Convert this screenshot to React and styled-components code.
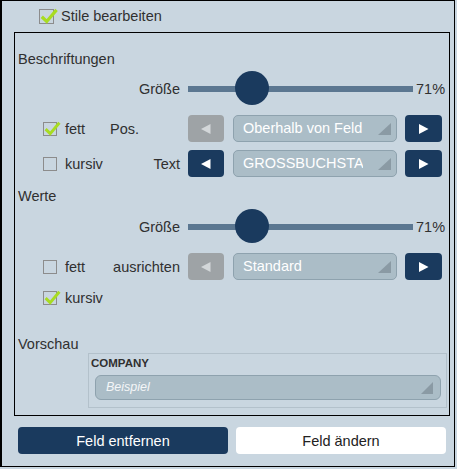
import React from "react";
import styled, { createGlobalStyle } from "styled-components";

const C = {
  bg: "#c9d6e0",
  text: "#303030",
  navy: "#1a3a5e",
  disabled: "#9ea3a6",
  disabledArrow: "#d3d7d9",
  drop: "#abbdc7",
  dropBorder: "#8ea2ae",
  dropTri: "#8a9aa4",
  track: "#5b7791",
  lime: "#a8dc22",
  boxBorder: "#8c8c8c",
  previewBorder: "#b3c1cb",
};

const FS = "14.5px";

const Global = createGlobalStyle`
  html, body { margin: 0; padding: 0; background: ${C.bg}; }
  body { font-family: "Liberation Sans", Arial, sans-serif; color: ${C.text}; }
`;

const Panel = styled.div`
  width: 455px;
  height: 467px;
  box-sizing: border-box;
  border: 1px solid #000;
  border-left-width: 2px;
  background: ${C.bg};
  display: flex;
  flex-direction: column;
`;

const Header = styled.div`
  height: 31px;
  display: flex;
  align-items: center;
  padding-left: 37px;
  padding-bottom: 1px;
  box-sizing: border-box;
  gap: 7px;
  font-size: ${FS};
`;

const BoxWrap = styled.span`
  position: relative;
  display: inline-block;
  flex: none;
  width: ${(p) => p.$size}px;
  height: ${(p) => p.$size}px;
  box-sizing: border-box;
  border: 1px solid ${C.boxBorder};
`;

const Tick = styled.svg`
  position: absolute;
  left: -1px;
  top: -1px;
  overflow: visible;
`;

function CheckBox({ checked, size = 14 }) {
  return (
    <BoxWrap $size={size}>
      {checked && (
        <Tick width={size} height={size} viewBox="0 0 14 14">
          <polyline
            points="2.6,7.2 7.2,11.6 16.4,0.8"
            fill="none"
            stroke={C.lime}
            strokeWidth="3"
            strokeLinejoin="miter"
          />
        </Tick>
      )}
    </BoxWrap>
  );
}

const Inner = styled.div`
  margin-left: 12px;
  width: 436px;
  height: 384px;
  box-sizing: border-box;
  border: 1px solid #000;
  padding: 16px 2px 7px 3px;
  display: flex;
  flex-direction: column;
`;

const SectionTitle = styled.div`
  font-size: ${FS};
  line-height: ${(p) => p.$lh || 20}px;
  height: ${(p) => p.$lh || 20}px;
  margin-top: ${(p) => p.$mt || 0}px;
  white-space: nowrap;
`;

const Row = styled.div`
  display: grid;
  grid-template-columns: 80px 74px 1fr;
  column-gap: 8px;
  align-items: center;
  height: ${(p) => p.$h}px;
  margin-top: ${(p) => p.$mt}px;
  font-size: ${FS};
`;

const CheckCell = styled.div`
  display: flex;
  align-items: center;
  gap: 8px;
  padding-left: 25px;
  white-space: nowrap;
`;

const Label = styled.div`
  text-align: ${(p) => p.$align || "right"};
  padding-left: ${(p) => p.$pl || 0}px;
  white-space: nowrap;
`;

const SliderBox = styled.div`
  display: flex;
  align-items: center;
  gap: 3px;
`;

const Track = styled.div`
  position: relative;
  width: 225px;
  height: 6px;
  background: ${C.track};
`;

const Thumb = styled.div`
  position: absolute;
  left: ${(p) => p.$left}px;
  top: 50%;
  width: 34px;
  height: 34px;
  margin-top: -18px;
  border-radius: 50%;
  background: ${C.navy};
`;

const Pct = styled.span`
  font-size: ${FS};
`;

const Controls = styled.div`
  display: flex;
  align-items: center;
`;

const ArrowBtn = styled.div`
  width: ${(p) => p.$w}px;
  height: 27px;
  margin-left: ${(p) => p.$ml || 0}px;
  border-radius: 4px;
  background: ${(p) => (p.$disabled ? C.disabled : C.navy)};
  display: flex;
  align-items: center;
  justify-content: center;
  flex: none;
`;

const Drop = styled.div`
  position: relative;
  width: 164px;
  height: 27px;
  margin-left: 9px;
  box-sizing: border-box;
  border: 1px solid ${C.dropBorder};
  border-radius: 5px;
  background: ${C.drop};
  padding: 0 33px 0 9px;
  display: flex;
  align-items: center;
  flex: none;
`;

const DropText = styled.span`
  flex: 1;
  overflow: hidden;
  white-space: nowrap;
  color: #fff;
  font-size: ${FS};
  line-height: 25px;
`;

const Corner = styled.svg`
  position: absolute;
  right: ${(p) => p.$r}px;
  bottom: ${(p) => p.$b}px;
`;

function Arrow({ dir, disabled, w, ml }) {
  const color = disabled ? C.disabledArrow : "#fff";
  const pts = dir === "left" ? "0,5 9.5,0 9.5,10" : "0,0 9.5,5 0,10";
  return (
    <ArrowBtn $w={w} $ml={ml} $disabled={disabled}>
      <svg width="10" height="10" viewBox="0 0 10 10">
        <polygon points={pts} fill={color} />
      </svg>
    </ArrowBtn>
  );
}

function Select({ text }) {
  return (
    <Drop>
      <DropText>{text}</DropText>
      <Corner $r={5} $b={6} width="13" height="12" viewBox="0 0 13 12">
        <polygon points="13,0 13,12 0,12" fill={C.dropTri} />
      </Corner>
    </Drop>
  );
}

function Slider({ mt }) {
  return (
    <Row $h={34} $mt={mt}>
      <div />
      <Label>Größe</Label>
      <SliderBox>
        <Track>
          <Thumb $left={47} />
        </Track>
        <Pct>71%</Pct>
      </SliderBox>
    </Row>
  );
}

const Preview = styled.div`
  margin-left: 70px;
  margin-top: 1px;
  width: 359px;
  height: 55px;
  box-sizing: border-box;
  border: 1px solid ${C.previewBorder};
  padding: 1px 5px 0 2px;
`;

const Company = styled.div`
  font-size: 11.5px;
  font-weight: bold;
  line-height: 16px;
`;

const PreviewDrop = styled.div`
  position: relative;
  margin: 4px 0 0 4px;
  width: 346px;
  height: 25px;
  box-sizing: border-box;
  border: 1px solid ${C.dropBorder};
  border-radius: 6px;
  background: ${C.drop};
  padding-left: 10px;
  color: #f4f6f7;
  font-size: 12.5px;
  font-style: italic;
  line-height: 23px;
`;

const Footer = styled.div`
  margin-top: 11px;
  padding-left: 16px;
  display: flex;
  gap: 8px;
`;

const FootBtn = styled.div`
  width: 210px;
  height: 27px;
  border-radius: 4px;
  background: ${(p) => (p.$primary ? C.navy : "#fff")};
  color: ${(p) => (p.$primary ? "#fff" : "#222")};
  font-size: ${FS};
  display: flex;
  align-items: center;
  justify-content: center;
`;

export default function App() {
  return (
    <>
      <Global />
      <Panel>
        <Header>
          <CheckBox checked size={15} />
          <span>Stile bearbeiten</span>
        </Header>
        <Inner>
          <SectionTitle>Beschriftungen</SectionTitle>
          <Slider mt={3} />
          <Row $h={27} $mt={9}>
            <CheckCell>
              <CheckBox checked />
              <span>fett</span>
            </CheckCell>
            <Label $align="left" $pl={4}>Pos.</Label>
            <Controls>
              <Arrow dir="left" disabled w={36} />
              <Select text="Oberhalb von Feld" />
              <Arrow dir="right" w={37} ml={8} />
            </Controls>
          </Row>
          <Row $h={27} $mt={8}>
            <CheckCell>
              <CheckBox />
              <span>kursiv</span>
            </CheckCell>
            <Label>Text</Label>
            <Controls>
              <Arrow dir="left" w={36} />
              <Select text="GROSSBUCHSTABEN" />
              <Arrow dir="right" w={37} ml={8} />
            </Controls>
          </Row>
          <SectionTitle $mt={9}>Werte</SectionTitle>
          <Slider mt={4} />
          <Row $h={27} $mt={9}>
            <CheckCell>
              <CheckBox />
              <span>fett</span>
            </CheckCell>
            <Label>ausrichten</Label>
            <Controls>
              <Arrow dir="left" disabled w={36} />
              <Select text="Standard" />
              <Arrow dir="right" w={37} ml={8} />
            </Controls>
          </Row>
          <Row $h={27} $mt={4}>
            <CheckCell>
              <CheckBox checked />
              <span>kursiv</span>
            </CheckCell>
            <div />
            <div />
          </Row>
          <SectionTitle $mt={25} $lh={16}>Vorschau</SectionTitle>
          <Preview>
            <Company>COMPANY</Company>
            <PreviewDrop>
              Beispiel
              <Corner $r={7} $b={5} width="12" height="12" viewBox="0 0 12 12">
                <polygon points="12,0 12,12 0,12" fill={C.dropTri} />
              </Corner>
            </PreviewDrop>
          </Preview>
        </Inner>
        <Footer>
          <FootBtn $primary>Feld entfernen</FootBtn>
          <FootBtn>Feld ändern</FootBtn>
        </Footer>
      </Panel>
    </>
  );
}
